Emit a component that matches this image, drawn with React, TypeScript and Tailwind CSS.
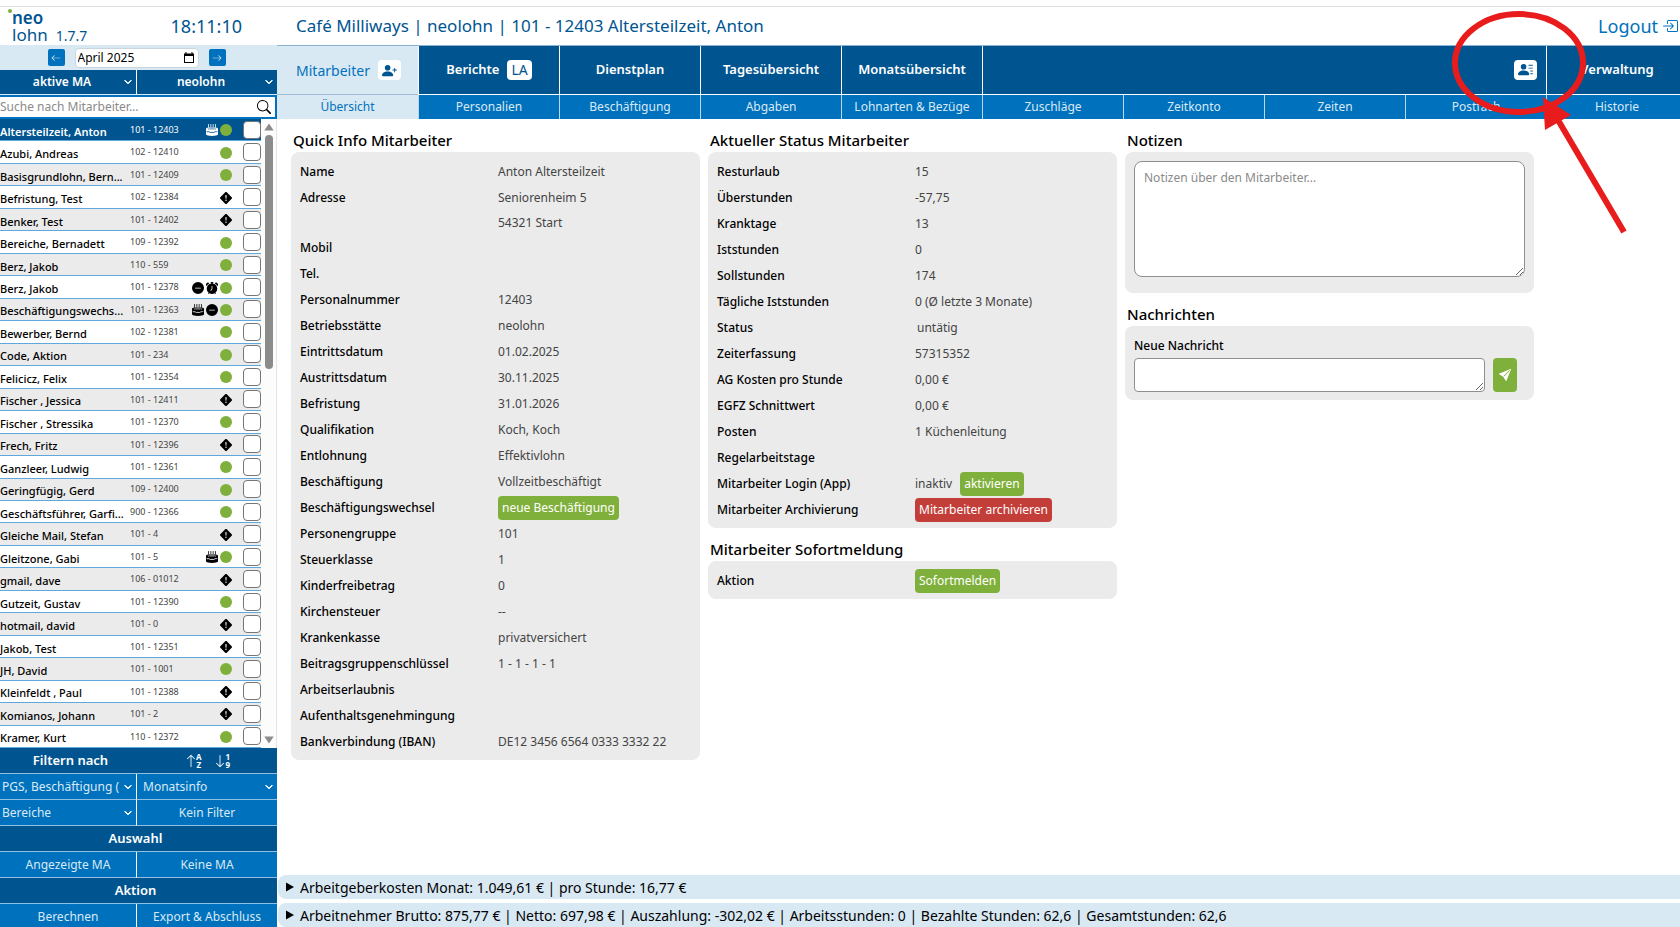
import { useState } from "react";
import type { ReactNode } from "react";
import {
  BsAlarmFill,
  BsArrowDown,
  BsArrowLeft,
  BsArrowRight,
  BsArrowUp,
  BsBoxArrowInRight,
  BsCake2Fill,
  BsChevronDown,
  BsDashCircleFill,
  BsExclamationDiamondFill,
  BsPersonLinesFill,
  BsPersonPlusFill,
  BsSearch,
  BsSendFill,
} from "react-icons/bs";

type Flag = "ok" | "warn" | "cake" | "dash" | "alarm";

const employees: [string, string, Flag[]][] = [
  ["Altersteilzeit, Anton", "101 - 12403", ["cake", "ok"]],
  ["Azubi, Andreas", "102 - 12410", ["ok"]],
  ["Basisgrundlohn, Bern...", "101 - 12409", ["ok"]],
  ["Befristung, Test", "102 - 12384", ["warn"]],
  ["Benker, Test", "101 - 12402", ["warn"]],
  ["Bereiche, Bernadett", "109 - 12392", ["ok"]],
  ["Berz, Jakob", "110 - 559", ["ok"]],
  ["Berz, Jakob", "101 - 12378", ["dash", "alarm", "ok"]],
  ["Beschäftigungswechs...", "101 - 12363", ["cake", "dash", "ok"]],
  ["Bewerber, Bernd", "102 - 12381", ["ok"]],
  ["Code, Aktion", "101 - 234", ["ok"]],
  ["Felicicz, Felix", "101 - 12354", ["ok"]],
  ["Fischer , Jessica", "101 - 12411", ["warn"]],
  ["Fischer , Stressika", "101 - 12370", ["ok"]],
  ["Frech, Fritz", "101 - 12396", ["warn"]],
  ["Ganzleer, Ludwig", "101 - 12361", ["ok"]],
  ["Geringfügig, Gerd", "109 - 12400", ["ok"]],
  ["Geschäftsführer, Garfi...", "900 - 12366", ["ok"]],
  ["Gleiche Mail, Stefan", "101 - 4", ["warn"]],
  ["Gleitzone, Gabi", "101 - 5", ["cake", "ok"]],
  ["gmail, dave", "106 - 01012", ["warn"]],
  ["Gutzeit, Gustav", "101 - 12390", ["ok"]],
  ["hotmail, david", "101 - 0", ["warn"]],
  ["Jakob, Test", "101 - 12351", ["warn"]],
  ["JH, David", "101 - 1001", ["ok"]],
  ["Kleinfeldt , Paul", "101 - 12388", ["warn"]],
  ["Komianos, Johann", "101 - 2", ["warn"]],
  ["Kramer, Kurt", "110 - 12372", ["ok"]],
];

function FlagIcon({ flag }: { flag: Flag }) {
  if (flag === "ok") return <span className="size-3 rounded-full bg-[#80b03c]" />;
  if (flag === "warn") return <BsExclamationDiamondFill className="size-3" />;
  if (flag === "cake") return <BsCake2Fill className="size-3" />;
  if (flag === "dash") return <BsDashCircleFill className="size-3" />;
  return <BsAlarmFill className="size-3" />;
}

function SideSelect({ label, strong, className }: { label: string; strong?: boolean; className: string }) {
  return (
    <div className={`relative flex min-w-0 ${className}`}>
      <select
        aria-label={label}
        className={
          strong
            ? "w-full appearance-none bg-transparent pr-3 text-center text-[12px] font-semibold text-white outline-none"
            : "w-full appearance-none bg-transparent pr-4 pl-[2px] text-[12px] text-[#d9e9f4] outline-none"
        }
      >
        <option>{label}</option>
      </select>
      <BsChevronDown className="pointer-events-none absolute inset-y-0 right-1 my-auto size-2 stroke-2 text-white" />
    </div>
  );
}

function SideButton({ children, className = "" }: { children: ReactNode; className?: string }) {
  return (
    <button className={`bg-[#0071bd] text-[12px] text-[#d9e9f4] ${className}`}>{children}</button>
  );
}

function SortButton({ label, icon, top, bottom }: { label: string; icon: ReactNode; top: string; bottom: string }) {
  return (
    <button aria-label={label} className="flex items-center">
      {icon}
      <span className="-ml-[2px] flex flex-col text-[8px] leading-2 font-bold">
        <span>{top}</span>
        <span>{bottom}</span>
      </span>
    </button>
  );
}

function Sidebar() {
  const [search, setSearch] = useState("");
  const [month, setMonth] = useState("April 2025");
  return (
    <aside className="flex w-[277px] shrink-0 flex-col">
      <div className="flex h-[38px] shrink-0 items-center pl-3 text-[#005591]">
        <div className="relative flex flex-col text-[17px] leading-[17px]">
          <span className="absolute top-0 -left-1 size-1 rounded-full bg-[#80b03c]" />
          <span className="font-semibold">neo</span>
          <span>lohn</span>
        </div>
        <span className="mt-5 ml-2 text-[14px] leading-4">1.7.7</span>
        <time className="mr-[35px] ml-auto text-[18px] leading-6">18:11:10</time>
      </div>

      <div className="flex h-[25px] shrink-0 items-center justify-center gap-[10px] bg-[#d9e9f4] pr-1">
        <button aria-label="Vorheriger Monat" className="flex size-[17px] items-center justify-center rounded-xs bg-[#0071bd] text-[#d9e9f4]">
          <BsArrowLeft className="size-[10px]" />
        </button>
        <div className="flex h-5 w-[124px] items-center rounded-sm border border-[#c9d6df] bg-white pr-1">
          <input
            aria-label="Monat"
            value={month}
            onChange={(e) => setMonth(e.target.value)}
            className="min-w-0 flex-1 pl-[2px] text-[12px] text-black outline-none"
          />
          <svg viewBox="0 0 10 11" aria-hidden="true" className="h-[11px] w-[10px]">
            <path d="M1.5 0h1v1.5h5V0h1v1.5H10V11H0V1.5h1.5zM1 4v6h8V4z" fillRule="evenodd" />
          </svg>
        </div>
        <button aria-label="Nächster Monat" className="flex size-[17px] items-center justify-center rounded-xs bg-[#0071bd] text-[#d9e9f4]">
          <BsArrowRight className="size-[10px]" />
        </button>
      </div>

      <div className="grid h-[25px] shrink-0 grid-cols-[137px_1fr] border-b border-[#d9e9f4] bg-[#005591]">
        <SideSelect label="aktive MA" strong className="border-r border-white" />
        <SideSelect label="neolohn" strong className="" />
      </div>

      <div className="h-6 shrink-0 bg-[#0071bd] py-[2px] pr-[2px]">
        <div className="flex h-full items-center bg-white">
          <input
            aria-label="Suche nach Mitarbeiter"
            placeholder="Suche nach Mitarbeiter..."
            value={search}
            onChange={(e) => setSearch(e.target.value)}
            className="min-w-0 flex-1 text-[12px] outline-none placeholder:text-[#8a8a8a]"
          />
          <BsSearch className="mr-1 size-[14px]" />
        </div>
      </div>

      <div className="flex min-h-0 flex-1">
        <ul className="flex min-w-0 flex-1 flex-col">
          {employees.map(([name, number, flags], i) => (
            <li
              key={number}
              className={`flex min-h-0 flex-1 items-center border-b border-[#5fa8db] ${
                i === 0 ? "bg-[#005591] text-white" : i % 2 ? "bg-white text-black" : "bg-[#ebebeb] text-black"
              }`}
            >
              <span
                className={`w-[126px] shrink-0 pt-1 text-[11px] leading-4 whitespace-nowrap ${
                  i === 0 ? "font-semibold" : "font-medium"
                }`}
              >
                {name}
              </span>
              <span className={`ml-1 text-[9px] ${i === 0 ? "text-white" : "text-[#444]"}`}>{number}</span>
              <span className="mr-[11px] ml-auto flex items-center gap-[2px] pt-[1px]">
                {flags.map((f) => (
                  <FlagIcon key={f} flag={f} />
                ))}
              </span>
              <input
                type="checkbox"
                aria-label={`${name} auswählen`}
                className="size-[18px] appearance-none rounded-sm border border-[#767676] bg-white checked:bg-[#0071bd]"
              />
            </li>
          ))}
        </ul>
        <div aria-hidden="true" className="flex w-4 flex-col items-center border-r border-[#e4e4e4] bg-[#fcfcfc] py-1">
          <svg viewBox="0 0 10 8" className="mb-1 h-2 w-[10px] fill-[#8b8b8b]"><path d="M5 0.5 9.7 7.5H.3z" /></svg>
          <div className="h-[234px] w-2 rounded-full bg-[#8b8b8b]" />
          <svg viewBox="0 0 10 8" className="mt-auto h-2 w-[10px] fill-[#8b8b8b]"><path d="M5 7.5 9.7.5H.3z" /></svg>
        </div>
      </div>

      <div className="grid h-[179px] shrink-0 grid-cols-[137px_1fr] grid-rows-[repeat(7,26px)] divide-y divide-[#8fc0e3] overflow-hidden bg-[#005591] text-[13px] text-white">
        <div className="flex items-center justify-center pl-1 font-semibold">Filtern nach</div>
        <div className="flex items-center justify-center gap-3">
          <SortButton label="Alphabetisch sortieren" icon={<BsArrowUp className="size-[14px]" />} top="A" bottom="Z" />
          <SortButton label="Numerisch sortieren" icon={<BsArrowDown className="size-[14px]" />} top="1" bottom="9" />
        </div>
        <SideSelect label="PGS, Beschäftigung (" className="border-r border-r-white bg-[#0071bd]" />
        <SideSelect label="Monatsinfo" className="bg-[#0071bd] pl-1" />
        <SideSelect label="Bereiche" className="border-r border-r-white bg-[#0071bd]" />
        <SideButton>Kein Filter</SideButton>
        <div className="col-span-2 flex items-center justify-center pr-[6px] font-semibold">Auswahl</div>
        <SideButton className="border-r border-r-white">Angezeigte MA</SideButton>
        <SideButton>Keine MA</SideButton>
        <div className="col-span-2 flex items-center justify-center pr-[6px] font-semibold">Aktion</div>
        <SideButton className="border-r border-r-white">Berechnen</SideButton>
        <SideButton>Export &amp; Abschluss</SideButton>
      </div>
    </aside>
  );
}

function Badge({ children }: { children: ReactNode }) {
  return (
    <span className="flex h-5 min-w-[22px] items-center justify-center rounded-sm bg-white px-1 text-[14px] font-normal text-[#005591]">
      {children}
    </span>
  );
}

const mainTabs: { label: string; badge?: ReactNode }[] = [
  { label: "Berichte", badge: "LA" },
  { label: "Dienstplan" },
  { label: "Tagesübersicht" },
  { label: "Monatsübersicht" },
];

const subTabs = ["Personalien", "Beschäftigung", "Abgaben", "Lohnarten & Bezüge", "Zuschläge", "Zeitkonto", "Zeiten", "Postfach", "Historie"];

function Navigation() {
  return (
    <nav className="shrink-0 overflow-hidden">
      <div className="grid w-[calc(100%+7px)] grid-cols-10 grid-rows-[49px_24px] border-t border-[#8db3d2]">
        <a href="#mitarbeiter" className="flex items-center justify-center gap-2 border-b border-[#9dbdd8] bg-[#d9e9f4] pl-[2px] text-[14px] text-[#0071bd]">
          Mitarbeiter
          <Badge><BsPersonPlusFill className="size-[15px]" /></Badge>
        </a>
        {mainTabs.map((t) => (
          <a key={t.label} href={`#${t.label}`} className="flex items-center justify-center gap-2 border-b border-l border-white bg-[#005591] pb-[1px] text-[13px] font-semibold text-white">
            {t.label}
            {t.badge && <Badge>{t.badge}</Badge>}
          </a>
        ))}
        <div className="col-span-4 flex items-center justify-end border-b border-l border-white bg-[#005591] pr-[9px] pb-[1px]">
          <button aria-label="Kontaktkarte"><Badge><BsPersonLinesFill className="size-[15px]" /></Badge></button>
        </div>
        <a href="#verwaltung" className="flex items-center justify-center border-b border-l border-white bg-[#005591] pb-[1px] text-[13px] font-semibold text-white">
          Verwaltung
        </a>
        <a href="#uebersicht" className="flex items-center justify-center bg-[#d9e9f4] text-[12px] text-[#0071bd]">Übersicht</a>
        {subTabs.map((label) => (
          <a key={label} href={`#${label}`} className="flex items-center justify-center border-l border-[#b9d8ee] bg-[#0071bd] text-[12px] text-[#d9e9f4]">
            {label}
          </a>
        ))}
      </div>
    </nav>
  );
}

function ActionButton({ children, danger }: { children: ReactNode; danger?: boolean }) {
  return (
    <button className={`h-6 rounded-sm px-1 text-[12px] text-white ${danger ? "bg-[#c43e39]" : "bg-[#80b03c]"}`}>
      {children}
    </button>
  );
}

function Section({ title, children }: { title: string; children: ReactNode }) {
  return (
    <section>
      <h2 className="h-6 pl-[2px] text-[15px] leading-6 font-medium text-black">{title}</h2>
      <div className="rounded-lg bg-[#ebebeb]">{children}</div>
    </section>
  );
}

function InfoList({ rows }: { rows: [string, ReactNode?][] }) {
  return (
    <dl className="px-[9px] pt-[7px] pb-[5px] text-[12px]">
      {rows.map(([label, value]) => (
        <div key={label} className="grid min-h-[26px] grid-cols-[198px_1fr]">
          <dt className="leading-[26px] font-medium text-black">{label}</dt>
          <dd className="flex items-center text-[#444]">{value}</dd>
        </div>
      ))}
    </dl>
  );
}

const quickInfo: [string, ReactNode?][] = [
  ["Name", "Anton Altersteilzeit"],
  ["Adresse", <span className="flex flex-col"><span className="leading-[26px]">Seniorenheim 5</span><span className="leading-6">54321 Start</span></span>],
  ["Mobil"],
  ["Tel."],
  ["Personalnummer", "12403"],
  ["Betriebsstätte", "neolohn"],
  ["Eintrittsdatum", "01.02.2025"],
  ["Austrittsdatum", "30.11.2025"],
  ["Befristung", "31.01.2026"],
  ["Qualifikation", "Koch, Koch"],
  ["Entlohnung", "Effektivlohn"],
  ["Beschäftigung", "Vollzeitbeschäftigt"],
  ["Beschäftigungswechsel", <ActionButton>neue Beschäftigung</ActionButton>],
  ["Personengruppe", "101"],
  ["Steuerklasse", "1"],
  ["Kinderfreibetrag", "0"],
  ["Kirchensteuer", "--"],
  ["Krankenkasse", "privatversichert"],
  ["Beitragsgruppenschlüssel", "1 - 1 - 1 - 1"],
  ["Arbeitserlaubnis"],
  ["Aufenthaltsgenehmingung"],
  ["Bankverbindung (IBAN)", "DE12 3456 6564 0333 3332 22"],
];

const status: [string, ReactNode?][] = [
  ["Resturlaub", "15"],
  ["Überstunden", "-57,75"],
  ["Kranktage", "13"],
  ["Iststunden", "0"],
  ["Sollstunden", "174"],
  ["Tägliche Iststunden", "0 (Ø letzte 3 Monate)"],
  ["Status", <span className="pl-[2px]">untätig</span>],
  ["Zeiterfassung", "57315352"],
  ["AG Kosten pro Stunde", "0,00 €"],
  ["EGFZ Schnittwert", "0,00 €"],
  ["Posten", "1 Küchenleitung"],
  ["Regelarbeitstage"],
  ["Mitarbeiter Login (App)", <span className="flex items-center gap-2">inaktiv <ActionButton>aktivieren</ActionButton></span>],
  ["Mitarbeiter Archivierung", <ActionButton danger>Mitarbeiter archivieren</ActionButton>],
];

function SummaryBar({ children }: { children: ReactNode }) {
  return (
    <details className="rounded-l-lg bg-[#d9e9f4] pl-2">
      <summary className="flex h-6 cursor-pointer list-none items-center gap-[6px] text-[14px] text-black">
        <svg viewBox="0 0 8 10" aria-hidden="true" className="h-[10px] w-2 fill-black"><path d="M0 0.5 8 5 0 9.5z" /></svg>
        <span>{children}</span>
      </summary>
    </details>
  );
}

export default function App() {
  return (
    <div className="relative flex h-screen flex-col overflow-hidden bg-white font-['Noto_Sans',sans-serif]">
      <div className="h-[7px] shrink-0 border-b border-[#dedede]" />
      <div className="flex min-h-0 flex-1">
        <Sidebar />
        <div className="flex min-w-0 flex-1 flex-col">
          <header className="flex h-[38px] shrink-0 items-center justify-between pr-[2px] pl-[19px]">
            <h1 className="text-[17px] text-[#005591]">Café Milliways | neolohn | 101 - 12403 Altersteilzeit, Anton</h1>
            <a href="#logout" className="flex items-center gap-1 text-[18px] text-[#0071bd]">
              Logout <BsBoxArrowInRight className="size-4" />
            </a>
          </header>
          <Navigation />
          <main className="flex min-h-0 flex-1 gap-2 pt-[9px] pl-[14px]">
            <div className="w-[409px]">
              <Section title="Quick Info Mitarbeiter"><InfoList rows={quickInfo} /></Section>
            </div>
            <div className="flex w-[409px] flex-col gap-[9px]">
              <Section title="Aktueller Status Mitarbeiter"><InfoList rows={status} /></Section>
              <Section title="Mitarbeiter Sofortmeldung">
                <InfoList rows={[["Aktion", <ActionButton>Sofortmelden</ActionButton>]]} />
              </Section>
            </div>
            <div className="flex w-[409px] flex-col gap-[9px]">
              <Section title="Notizen">
                <div className="px-[9px] pt-[9px] pb-4">
                  <textarea
                    aria-label="Notizen"
                    placeholder="Notizen über den Mitarbeiter..."
                    className="block h-[116px] w-full rounded-lg border border-[#8f8f8f] bg-white px-[9px] py-2 text-[12px] leading-4 placeholder:text-[#8a8a8a]"
                  />
                </div>
              </Section>
              <Section title="Nachrichten">
                <div className="px-[9px] pt-3 pb-2">
                  <label htmlFor="message" className="block h-5 text-[12px] leading-4 font-medium text-black">Neue Nachricht</label>
                  <div className="flex gap-2">
                    <textarea id="message" className="h-[34px] w-[351px] rounded-sm border border-[#8f8f8f] bg-white px-2 text-[12px]" />
                    <button aria-label="Nachricht senden" className="flex w-6 items-center justify-center rounded-sm bg-[#80b03c] text-white">
                      <BsSendFill className="size-3" />
                    </button>
                  </div>
                </div>
              </Section>
            </div>
          </main>
          <footer className="flex shrink-0 flex-col gap-1 pl-[1px]">
            <SummaryBar>Arbeitgeberkosten Monat: 1.049,61 € | pro Stunde: 16,77 €</SummaryBar>
            <SummaryBar>
              Arbeitnehmer Brutto: 875,77 € | Netto: 697,98 € | Auszahlung: -302,02 € | Arbeitsstunden: 0 | Bezahlte Stunden: 62,6 | Gesamtstunden: 62,6
            </SummaryBar>
          </footer>
        </div>
      </div>
      <svg aria-hidden="true" viewBox="0 0 180 230" className="pointer-events-none absolute top-2 right-[50px] h-[230px] w-[180px] fill-[#e81c1c]">
        <ellipse cx="69" cy="55" rx="64" ry="49" fill="none" stroke="#e81c1c" strokeWidth="6" />
        <path d="M108 112 174 224" stroke="#e81c1c" strokeWidth="6" />
        <path d="M93 89 121 107 95 122z" />
      </svg>
    </div>
  );
}
